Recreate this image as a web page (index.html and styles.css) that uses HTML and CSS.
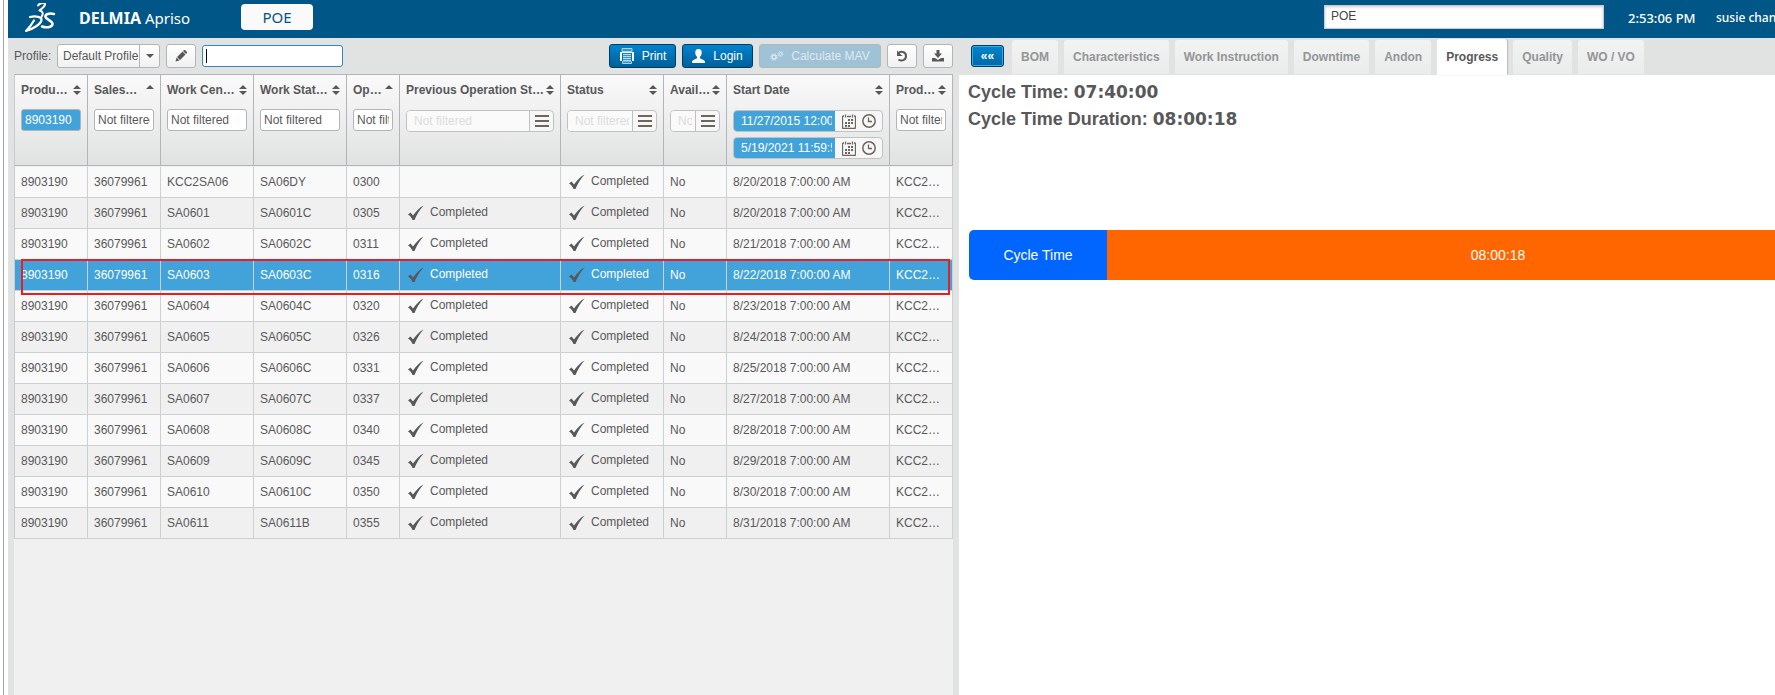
FILE: index.html
```html
<!DOCTYPE html>
<html lang="en">
<head>
<meta charset="utf-8">
<title>DELMIA Apriso - POE</title>
<link rel="stylesheet" href="styles.css">
</head>
<body>
<svg class="defs" aria-hidden="true">
  <symbol id="check" viewBox="0 0 16 16"><path d="M0 9.5 2.5 7.5 5 10.5 C8 6.500 11.500 2.500 15.500 .5 C11.500 5 8.500 10 6.500 15 L4.500 15 C3.500 12.500 2 10.500 0 9.500Z" fill="#58585a"/></symbol>
  <symbol id="menu" viewBox="0 0 14 12"><path d="M0 1h14M0 6h14M0 11h14" stroke="#6f655f" stroke-width="2"/></symbol>
  <symbol id="cal" viewBox="0 0 14 15"><path d="M2 2h-.5a1 1 0 0 0-1 1v10.500a1 1 0 0 0 1 1h11a1 1 0 0 0 1-1V3a1 1 0 0 0-1-1H12M5 2.500h4M3.500 .5v3M10.500 .5v3" fill="none" stroke="#6f655f" stroke-width="1.300"/><path d="M6 5h2v2H6zM9 5h2v2H9zM3 8h2v2H3zM6 8h2v2H6zM9 8h2v2H9zM3 11h2v2H3zM6 11h2v2H6z" fill="#6f655f"/></symbol>
  <symbol id="clock" viewBox="0 0 14 14"><circle cx="7" cy="7" r="6.200" fill="none" stroke="#6f655f" stroke-width="1.500"/><path d="M6.500 3.500V7.500H10" fill="none" stroke="#6f655f" stroke-width="1.300"/></symbol>
  <symbol id="sort" viewBox="0 0 8 10"><path d="M4 0 8 4H0zM4 10 0 6h8z" fill="#58585a"/></symbol>
  <symbol id="asc" viewBox="0 0 8 10"><path d="M4 0 8 4H0z" fill="#58585a"/></symbol>
</svg>

<div class="app">
  <header class="topbar">
    <svg class="logo" viewBox="0 0 32 32" aria-label="3DS"><g fill="none" stroke="#fff" stroke-linecap="round" stroke-linejoin="round"><path d="M14 2.500C16 -.5 21.500 -.8 21 1.500C20.500 4 18 5.500 15.500 7.500C19 8 19.500 11 17.500 14" stroke-width="2"/><path d="M6 14C12 12.500 18 14 17.500 17C17 21 9 26 2 28C5 25 8 21 10 17.500" stroke-width="2.200"/><path d="M30 11C25 9.500 20.500 11.500 21.500 14C22.500 17 29.500 18 28.500 21.500C27.500 24.500 22 25 18 23.500" stroke-width="2.500"/></g></svg>
    <div class="brand"><b>DELMIA</b> Apriso</div>
    <button class="screen">POE</button>
    <div class="session">
      <input class="search" aria-label="Search" value="POE">
      <span class="time">2:53:06 PM</span>
      <span class="user">susie chan</span>
    </div>
  </header>

  <div class="panels">
    <main class="left">
      <div class="toolbar">
        <label for="profile">Profile:</label>
        <div class="pick"><select id="profile"><option>Default Profile</option></select></div>
        <button class="btn icon" aria-label="Edit"><svg width="12" height="12" viewBox="0 0 12 12"><path d="M.5 11.500 1.500 7.500 4.500 10.500zM2 7 7.500 1.500 10.500 4.500 5 10zM8 1 9 0h1l2 2v1l-1 1z" fill="#58585a"/></svg></button>
        <div class="find"><input class="quick" aria-label="Quick find"></div>
        <div class="actions">
          <button class="btn blue print"><svg width="16" height="16" viewBox="0 0 16 16"><path d="M3 .5h10v3H3zM3.500 13.500h9v2h-9z" fill="#3a93cc" stroke="#a8d2ee"/><path d="M1 4h14v9h-2V5H3v8H1z" fill="#fff"/><path d="M4 5.500h8v8H4z" fill="#3a93cc"/><path d="M4 6.500h8M4 8.500h8M4 10.500h8M4 12.500h8" stroke="#b5daf2"/></svg>Print</button>
          <button class="btn blue login"><svg width="13" height="14" viewBox="0 0 13 14"><path d="M6.500 0C9 0 10 2 9.700 4.200 9.500 6 8.700 7 8 7.700V9c0 1 5 1.500 5 4v1H0v-1c0-2.500 5-3 5-4V7.700C4.300 7 3.500 6 3.300 4.200 3 2 4 0 6.500 0Z" fill="#fff"/></svg>Login</button>
          <button class="btn mav" disabled><svg width="14" height="10" viewBox="0 0 14 10"><g fill="none" stroke="#dfe9ef"><circle cx="4" cy="6" r="2" stroke-width="1.500"/><circle cx="4" cy="6" r="3.300" stroke-dasharray="1.300 1.290"/><circle cx="10.500" cy="3" r="1.500"/><circle cx="10.500" cy="3" r="2.500" stroke-dasharray="1 .96"/></g></svg>Calculate MAV</button>
          <button class="btn icon" aria-label="Undo"><svg width="12" height="12" viewBox="0 0 12 12"><path d="M2 3.500C4 1 10 1 10 6C10 10.500 5.500 11.500 2.500 9.500" fill="none" stroke="#58585a" stroke-width="2"/><path d="M1 .5V6h5.500z" fill="#58585a"/></svg></button>
          <button class="btn icon" aria-label="Download"><svg width="12" height="12" viewBox="0 0 12 12"><path d="M4.500 0h3v3.500H10L6 8 2 3.500h2.500zM0 8h3l3 2 3-2h3v3.500H0z" fill="#58585a"/></svg></button>
        </div>
      </div>

      <div class="grid">
        <table>
          <colgroup><col class="w73"><col class="w73"><col class="w93"><col class="w93"><col class="w53"><col class="w161"><col class="w103"><col class="w63"><col class="w163"><col class="w63"></colgroup>
          <thead><tr>
            <th><div class="cap"><span>Produ…</span><svg><use href="#sort"/></svg></div><input class="flt on" aria-label="Product filter" value="8903190"></th>
            <th><div class="cap"><span>Sales…</span><svg><use href="#asc"/></svg></div><input class="flt" aria-label="Sales filter" value="Not filtered"></th>
            <th><div class="cap"><span>Work Cen…</span><svg><use href="#sort"/></svg></div><input class="flt" aria-label="Work center filter" value="Not filtered"></th>
            <th><div class="cap"><span>Work Stat…</span><svg><use href="#sort"/></svg></div><input class="flt" aria-label="Work station filter" value="Not filtered"></th>
            <th><div class="cap"><span>Op…</span><svg><use href="#asc"/></svg></div><input class="flt" aria-label="Operation filter" value="Not filtered"></th>
            <th><div class="cap"><span>Previous Operation St…</span><svg><use href="#sort"/></svg></div><div class="combo"><input aria-label="Previous status filter" placeholder="Not filtered"><button aria-label="Choose"><svg class="m"><use href="#menu"/></svg></button></div></th>
            <th><div class="cap"><span>Status</span><svg><use href="#sort"/></svg></div><div class="combo"><input aria-label="Status filter" placeholder="Not filtered"><button aria-label="Choose"><svg class="m"><use href="#menu"/></svg></button></div></th>
            <th><div class="cap"><span>Avail…</span><svg><use href="#sort"/></svg></div><div class="combo"><input aria-label="Available filter" placeholder="Not filtered"><button aria-label="Choose"><svg class="m"><use href="#menu"/></svg></button></div></th>
            <th><div class="cap"><span>Start Date</span><svg><use href="#sort"/></svg></div>
              <div class="combo date"><input aria-label="From" value="11/27/2015 12:00:00 AM"><button aria-label="Pick date"><svg class="c"><use href="#cal"/></svg></button><button aria-label="Pick time"><svg class="k"><use href="#clock"/></svg></button></div>
              <div class="combo date"><input aria-label="To" value="5/19/2021 11:59:59 PM"><button aria-label="Pick date"><svg class="c"><use href="#cal"/></svg></button><button aria-label="Pick time"><svg class="k"><use href="#clock"/></svg></button></div></th>
            <th><div class="cap"><span>Prod…</span><svg><use href="#sort"/></svg></div><input class="flt" aria-label="Production filter" value="Not filtered"></th>
          </tr></thead>
          <tbody id="rows"></tbody>
        </table>
      </div>
    </main>

    <section class="right">
      <nav class="tabs">
        <button class="back" aria-label="Collapse">««</button>
        <button class="tab">BOM</button><button class="tab">Characteristics</button><button class="tab">Work Instruction</button><button class="tab">Downtime</button><button class="tab">Andon</button><button class="tab active">Progress</button><button class="tab">Quality</button><button class="tab">WO / VO</button>
      </nav>
      <div class="content">
        <p class="fact">Cycle Time: <strong>07:40:00</strong></p>
        <p class="fact">Cycle Time Duration: <strong>08:00:18</strong></p>
        <div class="bar"><div class="seg name">Cycle Time</div><div class="seg over">08:00:18</div></div>
      </div>
    </section>
  </div>
</div>
<script src="rows.js"></script>
</body>
</html>
```

FILE: rows.js
```js
const data = [
  ["KCC2SA06", "SA06DY", "0300", "8/20/2018"],
  ["SA0601", "SA0601C", "0305", "8/20/2018"],
  ["SA0602", "SA0602C", "0311", "8/21/2018"],
  ["SA0603", "SA0603C", "0316", "8/22/2018"],
  ["SA0604", "SA0604C", "0320", "8/23/2018"],
  ["SA0605", "SA0605C", "0326", "8/24/2018"],
  ["SA0606", "SA0606C", "0331", "8/25/2018"],
  ["SA0607", "SA0607C", "0337", "8/27/2018"],
  ["SA0608", "SA0608C", "0340", "8/28/2018"],
  ["SA0609", "SA0609C", "0345", "8/29/2018"],
  ["SA0610", "SA0610C", "0350", "8/30/2018"],
  ["SA0611", "SA0611B", "0355", "8/31/2018"]
];
const done = '<div class="done"><svg><use href="#check"/></svg><span>Completed</span></div>';
document.getElementById("rows").innerHTML = data.map((r, i) => {
  const picked = i === 3;
  const cells = ["8903190" + (picked ? '<span class="frame"></span>' : ""), "36079961", r[0], r[1], r[2],
    i ? done : "", done, "No", r[3] + " 7:00:00 AM", "KCC2…"];
  return `<tr${picked ? ' class="picked"' : ""}>` + cells.map(c => `<td>${c}</td>`).join("") + "</tr>";
}).join("");
```

FILE: styles.css
```css
* { box-sizing: border-box; }
html, body { height: 100%; }
body {
  margin: 0;
  padding-left: 3px;
  overflow: hidden;
  background: #fff;
  font: 12px/16px "Liberation Sans", Arial, sans-serif;
  color: #58585a;
}
button, input, select { font: inherit; color: inherit; margin: 0; min-width: 0; }
button { cursor: pointer; }
.defs { position: absolute; width: 0; height: 0; }

.app {
  min-height: 100%;
  display: flex;
  flex-direction: column;
  border-left: 1px solid #a5a5a7;
  padding-left: 4px;
}

.topbar {
  height: 38px;
  flex: none;
  display: flex;
  align-items: center;
  background: #005686;
  color: #fff;
  font-family: "Noto Sans", sans-serif;
  white-space: nowrap;
}
.logo { width: 32px; height: 32px; margin-left: 16px; }
.brand { width: 162px; margin-left: 23px; padding-bottom: 2px; font-size: 15px; }
.brand b { font-size: 16px; }
.screen {
  width: 72px;
  height: 26px;
  margin-bottom: 4px;
  padding: 0;
  border: 0;
  border-radius: 4px;
  background: #fafafa;
  color: #005686;
  font-size: 15px;
}
.session { width: 451px; margin-left: auto; display: flex; align-items: center; }
.search {
  width: 280px;
  height: 24px;
  flex: none;
  margin-bottom: 4px;
  padding: 0 6px 2px;
  border: 1px solid #ccc;
  background: #fff;
  color: #444;
  box-shadow: inset 0 1px 3px #ccc;
  font-family: "Liberation Sans", Arial, sans-serif;
}
.time { width: 88px; flex: none; margin-left: 24px; padding-bottom: 2px; font-size: 13px; font-weight: 500; }
.user { flex: none; padding-bottom: 2px; font-size: 12px; font-weight: 500; }

.panels { flex: 1; display: flex; }
.left {
  width: 951px;
  flex: none;
  display: flex;
  flex-direction: column;
  padding: 0 6px;
  background: #e1e3e2;
}
.toolbar { height: 36px; display: flex; align-items: center; gap: 6px; }
.toolbar label { width: 37px; white-space: nowrap; }
.pick { position: relative; width: 103px; height: 24px; }
.pick select {
  appearance: none;
  width: 100%;
  height: 100%;
  padding: 0 20px 0 5px;
  border: 1px solid #b2b5b7;
  border-radius: 3px;
  background: linear-gradient(#fff, #f1f1f1);
}
.pick::before { content: ""; position: absolute; right: 20px; top: 1px; bottom: 1px; border-left: 1px solid #b2b5b7; }
.pick::after { content: ""; position: absolute; right: 6px; top: 10px; border: 4px solid transparent; border-top-color: #58585a; pointer-events: none; }
.btn {
  height: 24px;
  display: flex;
  align-items: center;
  justify-content: center;
  border: 1px solid #b2b5b7;
  border-radius: 3px;
  padding: 0;
  background: linear-gradient(#fff, #f1f1f1);
  white-space: nowrap;
}
.icon { width: 30px; }
.find { position: relative; width: 141px; height: 22px; }
.find::after { content: ""; position: absolute; left: 4px; top: 4px; bottom: 4px; border-left: 1px solid #000; pointer-events: none; }
.quick { display: block; width: 100%; height: 100%; padding: 0 3px; border: 1px solid #3388c4; border-radius: 3px; outline: 0; background: #fff; }
.actions { margin-left: auto; display: flex; gap: 6px; }
.blue { gap: 7px; border-color: #003c5e; background: linear-gradient(#0084d0, #005f98); color: #fff; }
.print { width: 67px; }
.login { width: 71px; gap: 8px; }
.mav { width: 122px; gap: 7px; background: #9fc2d6; border-color: #b0b9be; color: #dfe9ef; }

.grid { flex: 1; background: #f0f0f0; }
table {
  width: 100%;
  table-layout: fixed;
  border-collapse: separate;
  border-spacing: 0;
  border-left: 1px solid #c9cccd;
}
.w53 { width: 53px; } .w63 { width: 63px; } .w73 { width: 73px; } .w93 { width: 93px; }
.w103 { width: 103px; } .w161 { width: 161px; } .w163 { width: 163px; }
thead { background: linear-gradient(#fafafa, #e0e2e1); }
th {
  height: 92px;
  padding: 7px 6px 0;
  vertical-align: top;
  text-align: left;
  border: solid #b2b5b7;
  border-width: 1px 1px 1px 0;
  font-weight: normal;
}
.cap { display: flex; justify-content: space-between; font-weight: bold; margin-bottom: 11px; white-space: nowrap; }
.cap svg { flex: none; width: 8px; height: 10px; margin-top: 3px; }
.flt {
  display: block;
  width: 100%;
  height: 22px;
  padding: 0 3px;
  border: 1px solid #b2b5b7;
  border-radius: 3px;
  background: #fff;
}
.flt.on { background: #42a2da; color: #fff; }
.combo {
  display: flex;
  height: 22px;
  margin: 12px 0 5px;
  overflow: hidden;
  border: 1px solid #bfc1c2;
  border-radius: 4px;
  background: #f7f7f7;
}
.combo + .combo { margin-top: 5px; }
.combo input { flex: 1; width: 0; border: 0; padding: 0 3px 0 7px; background: #fafafa; }
.combo input::placeholder { color: #dcdcdc; }
.combo button { width: 24px; flex: none; padding: 0; border: 0; border-left: 1px solid #bfc1c2; background: none; display: flex; align-items: center; justify-content: center; }
.combo.date input { background: #42a2da; color: #fff; }
.date button { border: 0; }
.date button:last-child { width: 22px; padding-right: 5px; }
.date button:nth-child(2) { width: 25px; padding-left: 2px; }
.m { width: 14px; height: 12px; }
.c { width: 14px; height: 15px; }
.k { width: 14px; height: 14px; }

td {
  height: 31px;
  padding: 0 6px;
  white-space: nowrap;
  border: solid #cdd0d1;
  border-width: 0 1px 1px 0;
}
tbody tr:first-child td { height: 32px; border-top: 1px solid #f0f0f0; }
tbody tr { background: #f9f9f9; }
tbody tr:nth-child(even) { background: #f0f0f0; }
tbody .picked, tbody .picked:nth-child(even) { position: relative; background: #42a2da; color: #fff; }
.frame { position: absolute; top: -1px; right: 3px; bottom: -4px; left: 6px; border: 2px solid #ed1c24; pointer-events: none; }
.done { display: flex; align-items: center; gap: 6px; padding-left: 2px; }
.done svg { width: 16px; height: 16px; flex: none; }
.done span { padding-bottom: 2px; }

.right { flex: 1; min-width: 0; overflow: hidden; display: flex; flex-direction: column; }
.tabs { height: 37px; display: flex; align-items: flex-end; gap: 6px; padding-left: 12px; background: #e1e3e2; }
.back {
  width: 33px;
  height: 22px;
  margin: 0 2px 8px 0;
  padding: 0;
  border: 1px solid #003c5e;
  border-radius: 3px;
  background: linear-gradient(#0084d0, #0068a5);
  box-shadow: inset 0 0 0 1px #2cb0ea;
  color: #fff;
  font-weight: bold;
}
.tab {
  height: 34px;
  margin-bottom: 1px;
  padding: 0 9px;
  border: 0;
  border-radius: 3px 3px 0 0;
  background: linear-gradient(#f2f3f3, #eaecec);
  color: #939596;
  font-weight: bold;
  white-space: nowrap;
}
.active { height: 36px; margin: 0; background: #fff; color: #58585a; box-shadow: 1px 0 1px #b9bbbb; }
.content { flex: 1; padding: 4px 0 0 9px; }
.fact { margin: 0; font-size: 18px; line-height: 27px; font-weight: bold; }
.fact strong { font-family: "DejaVu Sans", sans-serif; font-size: 17px; line-height: 20px; font-weight: bold; }
.bar { width: 920px; height: 50px; margin: 97px 0 0 1px; display: flex; border-radius: 5px; overflow: hidden; color: #fff; font-size: 14px; }
.seg { display: flex; align-items: center; justify-content: center; }
.name { width: 15%; background: #06f; }
.over { flex: 1; background: #f60; }
```
